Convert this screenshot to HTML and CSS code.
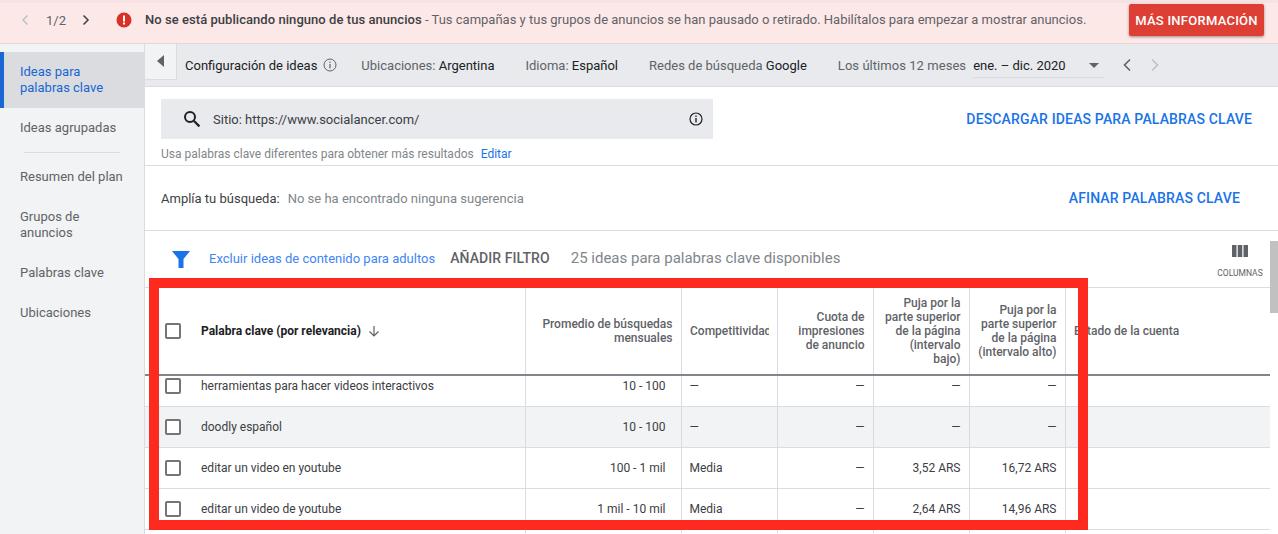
FILE: index.html
```html
<!DOCTYPE html>
<html lang="es">

<head>
    <meta charset="utf-8">
    <title>Ideas para palabras clave</title>
    <link rel="stylesheet" href="styles.css">
</head>

<body>
    <header class="banner">
        <svg class="pager-arrow" width="8" height="12" viewBox="0 0 8 12"><path d="M6.5 1.5 2 6l4.5 4.5" fill="none" stroke="#bdc1c6" stroke-width="1.5"/></svg>
        <span class="pager">1/2</span>
        <svg class="pager-arrow" width="8" height="12" viewBox="0 0 8 12"><path d="M1.5 1.5 6 6l-4.5 4.5" fill="none" stroke="#3c4043" stroke-width="1.5"/></svg>
        <svg class="alert-icon" width="16" height="16" viewBox="0 0 16 16"><circle cx="8" cy="8" r="7.5" fill="#d93025"/><rect x="7" y="3.5" width="2" height="6" fill="#fff"/><rect x="7" y="10.5" width="2" height="2" fill="#fff"/></svg>
        <p class="banner-text"><strong>No se está publicando ninguno de tus anuncios</strong> - Tus campañas y tus grupos de anuncios se han pausado o retirado. Habilítalos para empezar a mostrar anuncios.</p>
        <button class="btn-more">MÁS INFORMACIÓN</button>
    </header>

    <div class="layout">
        <aside class="sidebar">
            <a class="side-item side-active">Ideas para<br>palabras clave</a>
            <a class="side-item">Ideas agrupadas</a>
            <hr class="side-line">
            <a class="side-item">Resumen del plan</a>
            <a class="side-item">Grupos de<br>anuncios</a>
            <a class="side-item">Palabras clave</a>
            <a class="side-item">Ubicaciones</a>
        </aside>

        <main class="content">
            <section class="settings">
                <div class="toggle"><span class="toggle-arrow"></span></div>
                <span class="settings-title">Configuración de ideas</span>
                <svg class="info-small" width="14" height="14" viewBox="0 0 14 14"><circle cx="7" cy="7" r="6" fill="none" stroke="#5f6368"/><rect x="6.4" y="6" width="1.2" height="4.4" fill="#5f6368"/><rect x="6.4" y="3.6" width="1.2" height="1.3" fill="#5f6368"/></svg>
                <span class="setting setting-loc">Ubicaciones: <b>Argentina</b></span>
                <span class="setting setting-lang">Idioma: <b>Español</b></span>
                <span class="setting setting-net">Redes de búsqueda <b>Google</b></span>
                <span class="setting setting-date">Los últimos 12 meses</span>
                <div class="date-select"><span>ene. – dic. 2020</span><i class="caret"></i></div>
                <svg class="date-prev" width="10" height="14" viewBox="0 0 10 14"><path d="M8 1.5 2.5 7 8 12.5" fill="none" stroke="#5f6368" stroke-width="1.6"/></svg>
                <svg class="date-next" width="10" height="14" viewBox="0 0 10 14"><path d="M2 1.5 7.5 7 2 12.5" fill="none" stroke="#bdc1c6" stroke-width="1.6"/></svg>
            </section>

            <section class="search-block">
                <div class="search-row">
                    <div class="search-box">
                        <svg width="18" height="18" viewBox="0 0 18 18"><circle cx="7" cy="7" r="5" fill="none" stroke="#202124" stroke-width="2"/><path d="m10.8 10.8 5.6 5.6" stroke="#202124" stroke-width="2.2"/></svg>
                        <span class="search-text">Sitio: https://www.socialancer.com/</span>
                        <svg class="search-info" width="14" height="14" viewBox="0 0 14 14"><circle cx="7" cy="7" r="6" fill="none" stroke="#202124" stroke-width="1.2"/><rect x="6.3" y="6" width="1.4" height="4.4" fill="#202124"/><rect x="6.3" y="3.5" width="1.4" height="1.4" fill="#202124"/></svg>
                    </div>
                    <a class="link-action link-download">DESCARGAR IDEAS PARA PALABRAS CLAVE</a>
                </div>
                <p class="hint">Usa palabras clave diferentes para obtener más resultados <a class="hint-link">Editar</a></p>
            </section>

            <section class="expand">
                <span class="expand-label">Amplía tu búsqueda:</span>
                <span class="expand-none">No se ha encontrado ninguna sugerencia</span>
                <a class="link-action link-refine">AFINAR PALABRAS CLAVE</a>
            </section>

            <section class="results">
                <div class="results-body">
                    <div class="filter-row">
                        <svg class="filter-icon" width="18" height="17" viewBox="0 0 18 17"><path d="M0 0h18l-6.5 8v9h-5V8z" fill="#1a73e8"/></svg>
                        <a class="filter-adult">Excluir ideas de contenido para adultos</a>
                        <span class="filter-add">AÑADIR FILTRO</span>
                        <span class="filter-count">25 ideas para palabras clave disponibles</span>
                        <div class="columns-btn">
                            <svg width="16" height="12" viewBox="0 0 16 12"><path d="M0 0h4.5v12H0zM5.75 0h4.5v12h-4.5zM11.5 0H16v12h-4.5z" fill="#5f6368"/></svg>
                            <span>COLUMNAS</span>
                        </div>
                    </div>

                    <table class="ideas">
                        <colgroup>
                            <col class="col-check">
                            <col class="col-word">
                            <col class="col-avg">
                            <col class="col-num">
                            <col class="col-num">
                            <col class="col-num">
                            <col class="col-num">
                            <col>
                        </colgroup>
                        <thead>
                            <tr>
                                <th class="cell-check"><span class="check"></span></th>
                                <th class="head-word">Palabra clave (por relevancia)
                                    <svg class="sort-icon" width="12" height="12" viewBox="0 0 12 12"><path d="M6 1v9.5M1.5 6.5 6 11l4.500-4.500" fill="none" stroke="#5f6368" stroke-width="1.200"/></svg>
                                </th>
                                <th class="num">Promedio de búsquedas mensuales</th>
                                <th class="head-comp"><span class="clip">Competitividad</span></th>
                                <th class="num">Cuota de impresiones de anuncio</th>
                                <th class="num">Puja por la parte superior de la página (intervalo bajo)</th>
                                <th class="num">Puja por la parte superior de la página (intervalo alto)</th>
                                <th class="head-state">Estado de la cuenta</th>
                            </tr>
                        </thead>
                        <tbody>
                            <tr class="row-cut">
                                <td class="cell-check"><span class="check"></span></td>
                                <td>herramientas para hacer videos interactivos</td>
                                <td class="num range">10 - 100</td>
                                <td>—</td>
                                <td class="num">—</td>
                                <td class="num">—</td>
                                <td class="num">—</td>
                                <td></td>
                            </tr>
                            <tr class="row-hover">
                                <td class="cell-check"><span class="check"></span></td>
                                <td>doodly español</td>
                                <td class="num range">10 - 100</td>
                                <td>—</td>
                                <td class="num">—</td>
                                <td class="num">—</td>
                                <td class="num">—</td>
                                <td></td>
                            </tr>
                            <tr>
                                <td class="cell-check"><span class="check"></span></td>
                                <td>editar un video en youtube</td>
                                <td class="num range">100 - 1 mil</td>
                                <td>Media</td>
                                <td class="num">—</td>
                                <td class="num">3,52 ARS</td>
                                <td class="num">16,72 ARS</td>
                                <td></td>
                            </tr>
                            <tr>
                                <td class="cell-check"><span class="check"></span></td>
                                <td>editar un video de youtube</td>
                                <td class="num range">1 mil - 10 mil</td>
                                <td>Media</td>
                                <td class="num">—</td>
                                <td class="num">2,64 ARS</td>
                                <td class="num">14,96 ARS</td>
                                <td></td>
                            </tr>
                            <tr class="row-end">
                                <td></td><td></td><td></td><td></td><td></td><td></td><td></td><td></td>
                            </tr>
                        </tbody>
                    </table>
                </div>
                <div class="scrollbar"><div class="scroll-thumb"></div></div>
            </section>
        </main>
    </div>

    <div class="red-box"></div>
</body>

</html>
```

FILE: styles.css
```css
html, body {
    margin: 0;
    height: 534px;
    overflow: hidden;
}

body {
    font-family: Roboto, sans-serif;
    font-size: 13px;
    color: #202124;
    background: #fff;
    position: relative;
}

/* top banner */
.banner {
    display: flex;
    align-items: center;
    height: 44px;
    box-sizing: border-box;
    padding: 0 14px 6px 21px;
    background: #fde8e8;
    border-top: 3px solid #f6e2e2;
    border-bottom: 1px solid #e6d6d6;
}

.pager {
    margin: 0 16px 0 17px;
    color: #5f6368;
    font-size: 13px;
}

.alert-icon {
    margin-left: 26px;
    margin-right: 13px;
}

.banner-text {
    margin: 0 0 2px;
    flex: 1;
    color: #5f6368;
    font-size: 13px;
    white-space: nowrap;
}

.banner-text strong {
    font-weight: 500;
    color: #3c4043;
    letter-spacing: .05px;
}

.btn-more {
    width: 135px;
    height: 32px;
    padding: 0;
    border: none;
    border-radius: 2px;
    background: #dd3f35;
    color: #fff;
    font-family: Roboto, sans-serif;
    font-size: 13px;
    font-weight: 500;
    letter-spacing: .25px;
    box-shadow: 0 1px 3px rgba(0, 0, 0, .4);
}

.layout {
    display: flex;
    height: 490px;
}

/* sidebar */
.sidebar {
    width: 144px;
    flex: none;
    padding-top: 8px;
    box-sizing: border-box;
    background: #f1f3f4;
    color: #5f6368;
    line-height: 16px;
}

.side-item {
    display: block;
    padding: 12px 20px;
}

.side-active {
    height: 56px;
    box-sizing: border-box;
    background: #dadce0;
    border-left: 4px solid #1967d2;
    padding-left: 16px;
    color: #1967d2;
}

.side-line {
    margin: 4px 24px 4px;
    border: none;
    border-top: 1px solid #dadce0;
}

/* main column */
.content {
    flex: 1;
    min-width: 0;
    border-left: 1px solid #dadce0;
}

.settings {
    display: flex;
    align-items: center;
    height: 43px;
    box-sizing: border-box;
    background: #e8eaed;
    border-bottom: 1px solid #dadce0;
    color: #5f6368;
    white-space: nowrap;
}

.toggle {
    width: 32px;
    height: 36px;
    align-self: flex-start;
    box-sizing: border-box;
    background: #f1f3f4;
    border-right: 1px solid #dadce0;
    border-bottom: 1px solid #dadce0;
    padding: 11px 0 0 12px;
}

.toggle-arrow {
    display: block;
    width: 0;
    height: 0;
    border-top: 6px solid transparent;
    border-bottom: 6px solid transparent;
    border-right: 7px solid #5f6368;
}

.settings-title {
    margin-left: 8px;
    color: #202124;
}

.info-small {
    margin-left: 6px;
}

.setting b {
    font-weight: 400;
    color: #202124;
}

.setting-loc {
    margin-left: 24px;
}

.setting-lang {
    margin-left: 31px;
}

.setting-net {
    margin-left: 31px;
}

.setting-date {
    margin-left: 31px;
    letter-spacing: .05px;
}

.date-select {
    display: flex;
    align-items: center;
    justify-content: space-between;
    width: 132px;
    height: 26px;
    box-sizing: border-box;
    margin-left: 7px;
    padding: 2px 6px 0 0;
    border-bottom: 1px solid #dadce0;
    color: #202124;
}

.caret {
    border-left: 5px solid transparent;
    border-right: 5px solid transparent;
    border-top: 5px solid #5f6368;
}

.date-prev {
    margin-left: 17px;
}

.date-next {
    margin-left: 18px;
}

.search-block {
    height: 79px;
    box-sizing: border-box;
    padding: 12px 26px 0 16px;
    border-bottom: 1px solid #dadce0;
}

.search-row {
    display: flex;
    align-items: center;
    justify-content: space-between;
}

.search-box {
    display: flex;
    align-items: center;
    width: 552px;
    height: 40px;
    box-sizing: border-box;
    padding: 0 10px 0 22px;
    background: #e8eaed;
}

.search-text {
    flex: 1;
    margin-left: 12px;
    color: #3c4043;
}

.link-action {
    color: #1a73e8;
    font-size: 14px;
    font-weight: 500;
    letter-spacing: .15px;
}

.hint {
    margin: 8px 0 0;
    color: #80868b;
    font-size: 12px;
    line-height: 14px;
}

.hint-link {
    margin-left: 4px;
    color: #1a73e8;
}

.expand {
    display: flex;
    align-items: center;
    height: 65px;
    box-sizing: border-box;
    padding: 0 38px 0 16px;
    border-bottom: 1px solid #dadce0;
}

.expand-label {
    color: #3c4043;
}

.expand-none {
    margin-left: 8px;
    flex: 1;
    color: #80868b;
}

.results {
    display: flex;
}

.results-body {
    flex: 1;
    min-width: 0;
}

.scrollbar {
    width: 8px;
    padding-top: 10px;
}

.scroll-thumb {
    height: 72px;
    background: #c1c1c1;
}

.filter-row {
    display: flex;
    align-items: center;
    height: 57px;
    box-sizing: border-box;
    padding: 0 0 2px 27px;
    border-bottom: 1px solid #dadce0;
    white-space: nowrap;
}

.filter-icon {
    margin-top: 2px;
}

.filter-adult {
    margin-left: 19px;
    color: #4285f4;
    font-size: 13px;
}

.filter-add {
    margin-left: 15px;
    color: #5f6368;
    font-size: 14px;
    font-weight: 500;
    letter-spacing: .08px;
}

.filter-count {
    margin-left: 21px;
    flex: 1;
    color: #80868b;
    font-size: 15px;
}

.columns-btn {
    display: flex;
    flex-direction: column;
    align-items: center;
    width: 54px;
    margin-right: 3px;
    padding-top: 7px;
    color: #5f6368;
    font-size: 8.500px;
}

.columns-btn span {
    margin-top: 11px;
}

/* table */
.ideas {
    width: 1125px;
    table-layout: fixed;
    border-collapse: collapse;
    font-size: 12px;
    color: #3c4043;
}

.col-check {
    width: 46px;
}

.col-word {
    width: 334px;
}

.col-avg {
    width: 156px;
}

.col-num {
    width: 96px;
}

.ideas th {
    height: 87px;
    padding: 0 8px;
    box-sizing: border-box;
    font-weight: 500;
    text-align: left;
    line-height: 14px;
    color: #5f6368;
    border-left: 1px solid #dadce0;
    border-bottom: 2px solid #80868b;
}

.ideas td {
    height: 41px;
    padding: 0 8px;
    box-sizing: border-box;
    border-left: 1px solid #dadce0;
    border-bottom: 1px solid #dadce0;
    white-space: nowrap;
}

.ideas th:first-child,
.ideas td:first-child,
.ideas th:nth-child(2),
.ideas td:nth-child(2) {
    border-left: none;
}

.ideas .num {
    text-align: right;
}

.ideas .range {
    padding-right: 15px;
}

.ideas .cell-check {
    padding: 0 0 0 20px;
}

.ideas .head-word {
    padding-left: 10px;
    color: #202124;
    font-weight: 700;
    font-size: 12px;
    white-space: nowrap;
}

.ideas td:nth-child(2) {
    padding-left: 10px;
}

.ideas .head-comp,
.ideas .head-state {
    padding-left: 8.500px;
}

.sort-icon {
    margin-left: 4px;
    vertical-align: -2px;
}

.clip {
    display: block;
    overflow: hidden;
    white-space: nowrap;
}

.check {
    display: block;
    width: 16px;
    height: 16px;
    box-sizing: border-box;
    border: 2px solid #757575;
    border-radius: 2px;
    background: #fff;
}

.row-cut td {
    height: 31px;
    padding-bottom: 10px;
}

.ideas .row-cut .cell-check {
    padding-bottom: 10px;
}

.row-hover td {
    background: #f1f3f4;
}

.ideas .row-end td {
    height: 4px;
    border-bottom: none;
}

/* annotation drawn over the screenshot */
.red-box {
    position: absolute;
    left: 149px;
    top: 278px;
    width: 939px;
    height: 252px;
    box-sizing: border-box;
    border: 10px solid #ff2a1f;
}
```
